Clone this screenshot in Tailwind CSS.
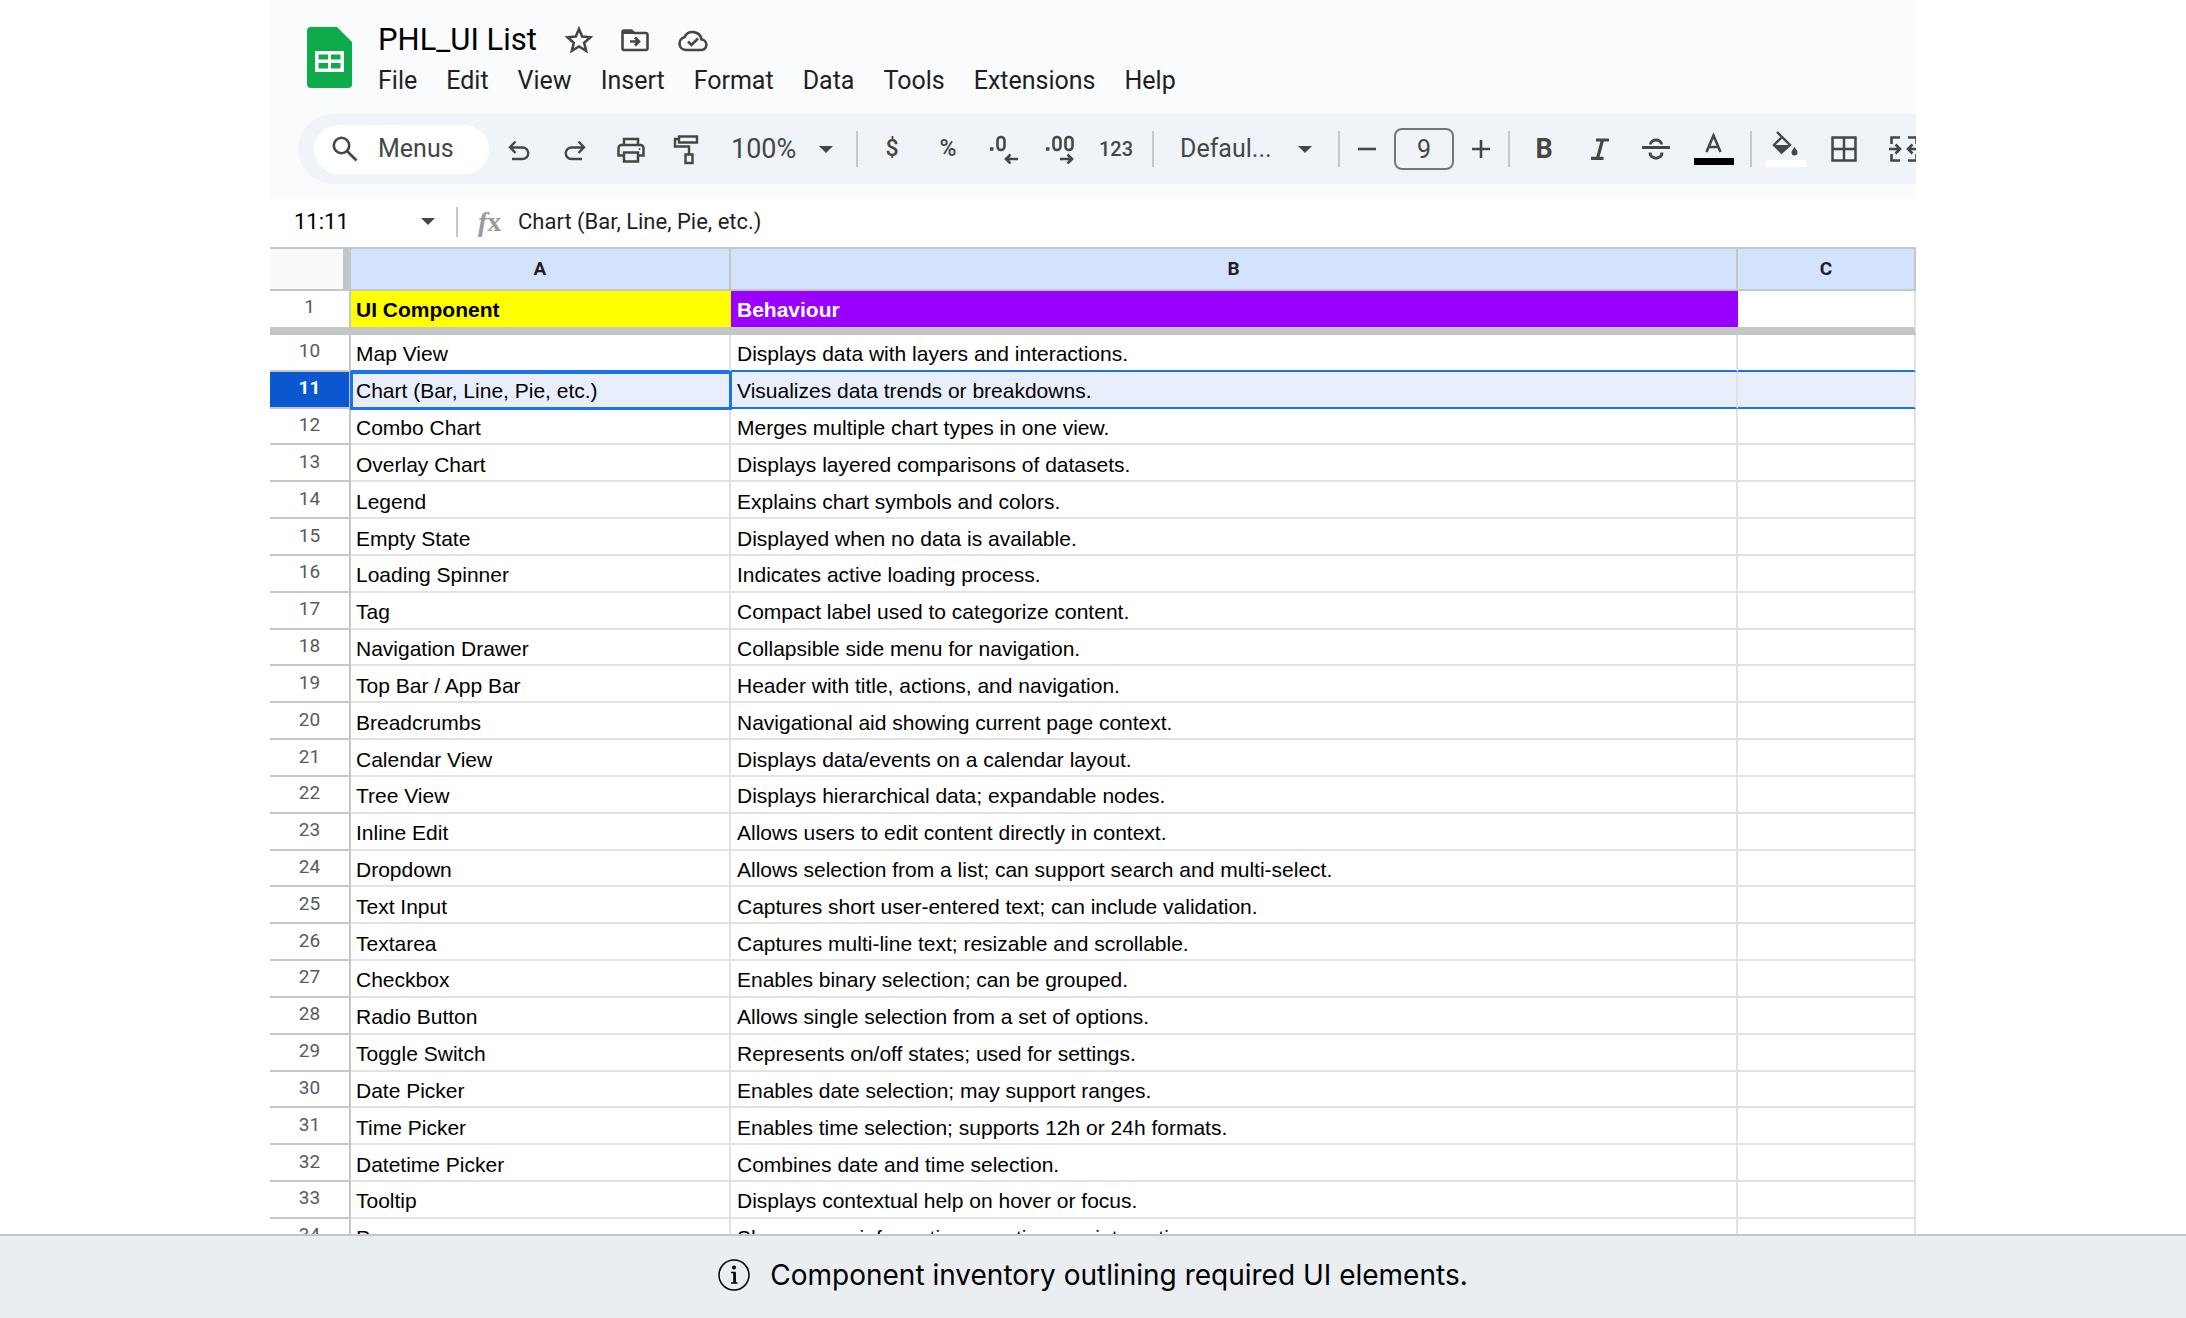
<!DOCTYPE html>
<html lang="en">
<head>
  <meta charset="UTF-8" />
  <meta name="viewport" content="width=device-width, initial-scale=1.0" />
  <title>PHL_UI List</title>

  <script src="https://cdn.jsdelivr.net/npm/@tailwindcss/browser@4"></script>
</head>
<body class="bg-white">

  <div class="flex flex-col h-screen overflow-hidden">
    <!-- Spreadsheet -->
    <main class="flex flex-col flex-1 min-h-0 mx-[270px] overflow-hidden font-[Roboto,sans-serif]">

      <!-- Title and menus -->
      <header class="flex flex-none gap-[26px] pl-[37px] pt-4 pb-4 bg-[#f9fbfd]">
        <svg class="w-[45px] h-[61px] mt-[11px]" viewBox="0 0 45 61">
          <path d="M4 0H30L45 15V57a4 4 0 0 1-4 4H4a4 4 0 0 1-4-4V4a4 4 0 0 1 4-4Z" fill="#0fab4b" />
          <path d="M8 24H37V45H8ZM11.500 27.500V32.500H21V27.500ZM24 27.500V32.500H33.500V27.500ZM11.500 36V41.500H21V36ZM24 36V41.500H33.500V36Z" fill="#fff" fill-rule="evenodd" />
        </svg>
        <div>
          <div class="flex items-center h-12 gap-7 text-[#444746]">
            <h1 class="text-[31px] text-black">PHL_UI List</h1>
            <button aria-label="Star"><svg class="w-7 h-7" viewBox="0 0 28 28" fill="none" stroke="currentColor" stroke-width="2.600"><path d="M14 3L17.200 10.600L25.500 11.300L19.200 16.700L21.100 24.800L14 20.500L6.900 24.800L8.800 16.700L2.500 11.300L10.800 10.600Z" /></svg></button>
            <button aria-label="Move"><svg class="w-7 h-7" viewBox="0 0 28 28" fill="none" stroke="currentColor" stroke-width="2.600"><path d="M1.500 6V22.500a1.500 1.500 0 0 0 1.500 1.500H25a1.500 1.500 0 0 0 1.500-1.500V8.500A1.500 1.500 0 0 0 25 7H13L10.500 4.500H3A1.500 1.500 0 0 0 1.500 6Z" /><path d="M2 5H10L13 8H2Z" fill="currentColor" stroke="none" /><path d="M9 15.500H18M14 11.500L18 15.500L14 19.500" /></svg></button>
            <button aria-label="See document status"><svg class="w-8 h-7" viewBox="0 0 32 28" fill="none" stroke="currentColor" stroke-width="2.600"><path d="M25 24H8.500A6.500 6.500 0 0 1 7.500 11.200A9 9 0 0 1 24.500 13.500A5.300 5.300 0 0 1 25 24Z" /><path d="M11 15.500L14.500 19L21 12.500" /></svg></button>
          </div>
          <nav class="flex items-center gap-[29px] h-[34px] text-[25px] text-[#1f1f1f]">
            <button>File</button>
            <button>Edit</button>
            <button>View</button>
            <button>Insert</button>
            <button>Format</button>
            <button>Data</button>
            <button>Tools</button>
            <button>Extensions</button>
            <button>Help</button>
          </nav>
        </div>
      </header>

      <!-- Toolbar -->
      <div class="flex-none pl-7 pb-[14px] bg-[#f9fbfd]">
        <div class="flex items-center h-[70px] pl-4 rounded-l-full bg-[#f0f4f9] text-[#444746] text-[25px] *:flex-none">
          <button class="flex items-center gap-5 w-[175px] h-[49px] pl-[18px] mr-0.5 rounded-full bg-white">
            <svg class="w-[26px] h-[26px]" viewBox="0 0 26 26" fill="none" stroke="currentColor" stroke-width="2.600"><circle cx="9.500" cy="9.500" r="7.700" /><path d="M15 15L24.500 24.500" /></svg>
            Menus
          </button>
          <button class="grid place-items-center w-14 h-12" aria-label="Undo"><svg class="w-6 h-6" viewBox="0 0 24 24" fill="none" stroke="currentColor" stroke-width="2.400"><path d="M5 22H15.500a5.700 5.700 0 0 0 0-11.500H4M8.500 4.500L3 10.200L8.500 16" /></svg></button>
          <button class="grid place-items-center w-14 h-12" aria-label="Redo"><svg class="w-6 h-6" viewBox="0 0 24 24" fill="none" stroke="currentColor" stroke-width="2.400"><path d="M19 22H8.500a5.700 5.700 0 0 1 0-11.500H20M15.500 4.500L21 10.200L15.500 16" /></svg></button>
          <button class="grid place-items-center w-14 h-12" aria-label="Print"><svg class="w-7 h-7" viewBox="0 0 28 28" fill="none" stroke="currentColor" stroke-width="2.500"><path d="M7 9.500V4H21V9.500M7 20.500H1.500V13a3 3 0 0 1 3-3H23.500a3 3 0 0 1 3 3V20.500H21M7 17.500H21V26.500H7Z" /><circle cx="22.500" cy="14" r="1" fill="currentColor" stroke="none" /></svg></button>
          <button class="grid place-items-center w-14 h-12" aria-label="Paint format"><svg class="w-7 h-8" viewBox="0 0 28 32" fill="none" stroke="currentColor" stroke-width="2.400"><path d="M6 3.500H24V9.500H6ZM6 6H2V13.500H16V21M12.500 21.500H19.500V30H12.500Z" /></svg></button>
          <div class="grid grid-cols-1 items-center w-[141px]">
            <select class="col-start-1 row-start-1 appearance-none w-full h-12 pl-4 text-[27px]" aria-label="Zoom"><option>100%</option></select>
            <svg class="col-start-1 row-start-1 justify-self-end w-[14px] h-[7px] mr-[23px] pointer-events-none" viewBox="0 0 14 7"><path d="M0 0H14L7 7Z" fill="currentColor" /></svg>
          </div>
          <div class="w-0.5 h-9 mr-1.5 bg-[#c7c7c7]"></div>
          <button class="w-14 h-12 text-[23px] font-medium">$</button>
          <button class="w-14 h-12 text-[23px] font-medium">%</button>
          <button class="grid place-items-center w-14 h-12" aria-label="Decrease decimal places"><svg class="w-[30px] h-[30px]" viewBox="0 0 30 30" fill="none" stroke="currentColor" stroke-width="2.600"><path d="M1 15H4.500" stroke-width="3.400" /><rect x="8.500" y="3" width="7" height="13" rx="3.500" /><path d="M29 25H17M21.500 20.500L17 25L21.500 29.500" /></svg></button>
          <button class="grid place-items-center w-14 h-12" aria-label="Increase decimal places"><svg class="w-[30px] h-[30px]" viewBox="0 0 30 30" fill="none" stroke="currentColor" stroke-width="2.600"><path d="M1 15H4.500" stroke-width="3.400" /><rect x="8.500" y="3" width="7" height="13" rx="3.500" /><rect x="20.500" y="3" width="7" height="13" rx="3.500" /><path d="M15 25H27M22.500 20.500L27 25L22.500 29.500" /></svg></button>
          <button class="w-14 h-12 mr-2 text-[20px] font-medium">123</button>
          <div class="w-0.5 h-9 bg-[#c7c7c7]"></div>
          <div class="grid grid-cols-1 items-center w-[184px]">
            <select class="col-start-1 row-start-1 appearance-none w-full h-12 pl-[26px]" aria-label="Font"><option>Defaul...</option></select>
            <svg class="col-start-1 row-start-1 justify-self-end w-[14px] h-[7px] mr-[26px] pointer-events-none" viewBox="0 0 14 7"><path d="M0 0H14L7 7Z" fill="currentColor" /></svg>
          </div>
          <div class="w-0.5 h-9 bg-[#c7c7c7]"></div>
          <button class="grid place-items-center w-[54px] h-12" aria-label="Decrease font size"><svg class="w-[18px] h-[18px]" viewBox="0 0 18 18" stroke="currentColor" stroke-width="2.600"><path d="M0 9H18" /></svg></button>
          <input class="w-[60px] h-[42px] border-2 border-[#747775] rounded-lg text-center" aria-label="Font size" value="9" />
          <button class="grid place-items-center w-[54px] h-12" aria-label="Increase font size"><svg class="w-[18px] h-[18px]" viewBox="0 0 18 18" stroke="currentColor" stroke-width="2.600"><path d="M0 9H18M9 0V18" /></svg></button>
          <div class="w-0.5 h-9 mr-1.5 bg-[#c7c7c7]"></div>
          <button class="w-14 h-12 text-[27px] font-bold">B</button>
          <button class="grid place-items-center w-14 h-12" aria-label="Italic"><svg class="w-5 h-[22px]" viewBox="0 0 20 22" fill="none" stroke="currentColor" stroke-width="3.200"><path d="M6 2H19M1 20.400H13.500M12.500 2L7.500 20.400" /></svg></button>
          <button class="grid place-items-center w-14 h-12" aria-label="Strikethrough"><svg class="w-7 h-[22px]" viewBox="0 0 28 22" fill="none" stroke="currentColor" stroke-width="3"><path d="M0 9.500H28" /><path d="M8.500 6.500C8.500 0.500 19.500 0.500 19.500 6.500M8 14.500C8 22 20 22 20 14.500" /></svg></button>
          <button class="grid place-items-center w-[60px] h-12 mr-1.5" aria-label="Text color"><svg class="w-10 h-8" viewBox="0 0 40 32" fill="none"><path d="M12.500 19L19.500 2.500L26.500 19M15 14H24" stroke="currentColor" stroke-width="2.600" /><path d="M0 25H40V32H0Z" fill="#000" /></svg></button>
          <div class="w-0.5 h-9 mr-1.5 bg-[#c7c7c7]"></div>
          <button class="grid place-items-center w-14 h-12" aria-label="Fill color"><svg class="w-10 h-9" viewBox="0 0 40 36" fill="none"><path d="M11 1L24 14L15.500 21.500L8 14L16 6" stroke="currentColor" stroke-width="2.400" /><path d="M8 14H24L15.500 21.500Z" fill="currentColor" /><path d="M28.500 16C30.500 19 31.500 20 31.500 21.500A3 3 0 0 1 25.500 21.500C25.500 20 26.500 19 28.500 16Z" fill="currentColor" /><path d="M0 29H40V36H0Z" fill="#fff" /></svg></button>
          <button class="grid place-items-center w-[60px] h-12" aria-label="Borders"><svg class="w-[26px] h-[26px]" viewBox="0 0 26 26" fill="none" stroke="currentColor" stroke-width="2.500"><path d="M1.500 1.500H24.500V24.500H1.500ZM13 1.500V24.500M1.500 13H24.500" /></svg></button>
          <button class="grid place-items-center w-[60px] h-12" aria-label="Merge cells"><svg class="w-[30px] h-[26px]" viewBox="0 0 30 26" fill="none" stroke="currentColor" stroke-width="2.600"><path d="M11 1.500H2.500V8M2.500 18V24.500H11M19 1.500H27.500V8M27.500 18V24.500H19M0 13H11M6.500 8.500L11 13L6.500 17.500M30 13H19M23.500 8.500L19 13L23.500 17.500" /></svg></button>
        </div>
      </div>

      <!-- Formula bar -->
      <div class="flex flex-none items-center h-[49px] pb-0.5 pl-6 text-[22px] text-[#1f1f1f]">
        <input class="w-[127px] text-black" aria-label="Name box" value="11:11" />
        <svg class="w-[14px] h-[7px] text-[#444746]" viewBox="0 0 14 7"><path d="M0 0H14L7 7Z" fill="currentColor" /></svg>
        <div class="w-0.5 h-[30px] ml-[21px] mr-5 bg-[#c7c7c7]"></div>
        <label for="formula" class="w-10 font-['Liberation_Serif',serif] text-[28px] leading-8 font-bold text-[#9a9c9b]"><i>f</i>x</label>
        <input id="formula" class="flex-1" value="Chart (Bar, Line, Pie, etc.)" />
      </div>

      <!-- Grid -->
      <div class="flex-1 min-h-0 overflow-hidden">
        <table class="w-full h-[calc(100%+22px)] table-fixed border-separate border-spacing-0 whitespace-nowrap">
          <colgroup>
            <col class="w-[81px]" />
            <col class="w-[380px]" />
            <col />
            <col class="w-[178px]" />
          </colgroup>
          <thead class="text-[19px] text-[#1f1f1f]">
            <tr class="h-[44px] *:border-y-2 *:border-r-2 *:border-[#c4c7c5] *:bg-[#d3e3fd] *:p-0 *:font-bold">
              <td class="border-r-8! bg-[#f8f9fa]!"></td>
              <th>A</th>
              <th>B</th>
              <th>C</th>
            </tr>
            <tr class="h-11 *:border-b-8 *:border-[#c4c7c5] *:p-0">
              <th class="border-r-2 pb-1! font-normal text-[#575b5f]">1</th>
              <th class="bg-[#ffff00] pl-[5px]! pt-0.5! text-left font-['Liberation_Sans',Arial,sans-serif] text-[21px] font-bold text-black">UI Component</th>
              <th class="bg-[#9900ff] pl-1.5! pt-0.5! text-left font-['Liberation_Sans',Arial,sans-serif] text-[21px] font-bold text-white">Behaviour</th>
              <td class="border-r-2 border-r-[#e1e3e1]!"></td>
            </tr>
          </thead>
          <tbody id="rows"></tbody>
        </table>
      </div>
    </main>

    <!-- Caption -->
    <footer class="flex flex-none items-center justify-center gap-5 h-[84px] pb-1 border-t-2 border-[#c4c7c9] bg-[#eaeef1] font-[Inter,sans-serif] text-[28px] text-black">
      <svg class="w-8 h-8" viewBox="0 0 32 32" fill="none" stroke="currentColor" stroke-width="1.500"><circle cx="16" cy="16" r="15" /><path d="M13 13.500H16.800V23.500M13 24H19.500" /><path d="M16.500 13.500V23.500" stroke-width="2.600" /><circle cx="16" cy="8.500" r="2" fill="currentColor" stroke="none" /></svg>
      <p>Component inventory outlining required UI elements.</p>
    </footer>
  </div>

  <script>
    const firstRow = 10;
    const selectedRow = 11;
    const components = [
      ['Map View', 'Displays data with layers and interactions.'],
      ['Chart (Bar, Line, Pie, etc.)', 'Visualizes data trends or breakdowns.'],
      ['Combo Chart', 'Merges multiple chart types in one view.'],
      ['Overlay Chart', 'Displays layered comparisons of datasets.'],
      ['Legend', 'Explains chart symbols and colors.'],
      ['Empty State', 'Displayed when no data is available.'],
      ['Loading Spinner', 'Indicates active loading process.'],
      ['Tag', 'Compact label used to categorize content.'],
      ['Navigation Drawer', 'Collapsible side menu for navigation.'],
      ['Top Bar / App Bar', 'Header with title, actions, and navigation.'],
      ['Breadcrumbs', 'Navigational aid showing current page context.'],
      ['Calendar View', 'Displays data/events on a calendar layout.'],
      ['Tree View', 'Displays hierarchical data; expandable nodes.'],
      ['Inline Edit', 'Allows users to edit content directly in context.'],
      ['Dropdown', 'Allows selection from a list; can support search and multi-select.'],
      ['Text Input', 'Captures short user-entered text; can include validation.'],
      ['Textarea', 'Captures multi-line text; resizable and scrollable.'],
      ['Checkbox', 'Enables binary selection; can be grouped.'],
      ['Radio Button', 'Allows single selection from a set of options.'],
      ['Toggle Switch', 'Represents on/off states; used for settings.'],
      ['Date Picker', 'Enables date selection; may support ranges.'],
      ['Time Picker', 'Enables time selection; supports 12h or 24h formats.'],
      ['Datetime Picker', 'Combines date and time selection.'],
      ['Tooltip', 'Displays contextual help on hover or focus.'],
      ['Popover', 'Shows more information or actions on interaction.'],
    ];

    document.getElementById('rows').innerHTML = components.map(([name, behaviour], i) => {
      const row = firstRow + i;
      const selected = row === selectedRow;
      const beforeSelected = row === selectedRow - 1;
      const line = selected || beforeSelected ? 'border-b-[#1a73e8]' : 'border-b-[#e1e3e1]';
      const cell = `p-0 pt-1 border-b-2 border-r-2 border-r-[#e1e3e1] ${line} ${selected ? 'bg-[#e8eefc]' : ''}`;
      const head = selected
        ? 'bg-[#0b57d0] font-bold text-white'
        : 'font-normal text-[#575b5f]';
      return `
        <tr class="text-[21px] leading-6 text-black font-['Liberation_Sans',Arial,sans-serif]">
          <th class="p-0 pb-0.5 border-b-2 border-r-2 border-[#c4c7c5] font-[Roboto,sans-serif] text-[19px] ${head}">${row}</th>
          <td class="${cell} pl-[5px] ${selected ? 'outline-3 -outline-offset-2 outline-[#1a73e8]' : ''}">${name}</td>
          <td class="${cell} pl-1.5">${behaviour}</td>
          <td class="${cell}"></td>
        </tr>`;
    }).join('');
  </script>
</body>
</html>
